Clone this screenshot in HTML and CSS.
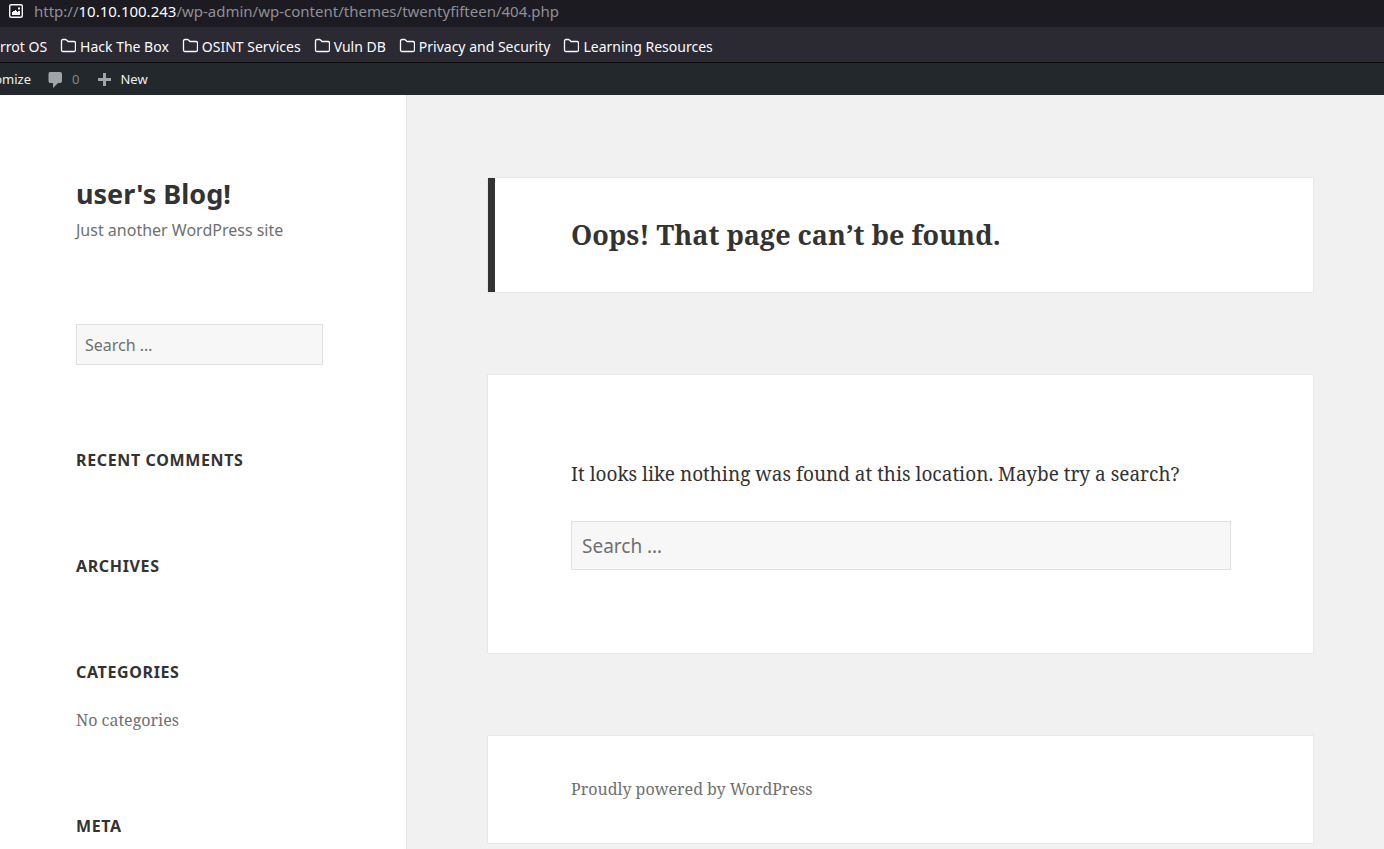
FILE: index.html
```html
<!DOCTYPE html>
<html lang="en">
<head>
<meta charset="utf-8">
<title>Page not found – user's Blog!</title>
<link rel="stylesheet" href="styles.css">
</head>
<body>
<svg class="defs" aria-hidden="true">
<symbol id="folder" viewBox="0 0 16 16"><path d="M1.500 3Q1.500 1.500 3 1.500H5.500Q6 1.500 6.500 2L8 3.500H14Q15.500 3.500 15.500 5V12Q15.500 13.500 14 13.500H3Q1.500 13.500 1.500 12Z" fill="none" stroke="currentColor" stroke-width="1.300"/></symbol>
</svg>
<div class="address">
<svg class="page-icon" viewBox="0 0 16 16" aria-hidden="true"><rect x="1.700" y="1.700" width="12.600" height="12.600" rx="1.500" fill="none" stroke="currentColor" stroke-width="1.400"/><path d="M4 12V9H5V8H7V7H8V8H9V9H10V8H12V12Z" fill="currentColor"/><path d="M10 4.500H12V6.500H10Z" fill="currentColor"/></svg>
<span class="url">http://<b>10.10.100.243</b>/wp-admin/wp-content/themes/twentyfifteen/404.php</span>
</div>
<nav class="bookmarks" aria-label="Bookmarks">
<a href="#">rrot OS</a>
<a href="#"><svg aria-hidden="true"><use href="#folder"/></svg>Hack The Box</a>
<a href="#"><svg aria-hidden="true"><use href="#folder"/></svg>OSINT Services</a>
<a href="#"><svg aria-hidden="true"><use href="#folder"/></svg>Vuln DB</a>
<a href="#"><svg aria-hidden="true"><use href="#folder"/></svg>Privacy and Security</a>
<a href="#"><svg aria-hidden="true"><use href="#folder"/></svg>Learning Resources</a>
</nav>
<nav class="adminbar" aria-label="Toolbar">
<a href="#" class="customize">omize</a>
<a href="#" class="comments"><svg viewBox="0 0 20 20" aria-hidden="true"><path d="M5 3h10q2 0 2 2v7q0 2-2 2h-2l-5 5v-5H5q-1.500 0-1.500-2V5q0-2 1.500-2z" fill="currentColor"/></svg>0</a>
<a href="#" class="new"><svg viewBox="0 0 20 20" aria-hidden="true"><path d="M17 9v3h-5v5H9v-5H4V9h5V4h3v5z" fill="currentColor"/></svg>New</a>
</nav>
<div class="site">
<aside class="sidebar">
<header>
<h1><a href="#">user's Blog!</a></h1>
<p class="tagline">Just another WordPress site</p>
</header>
<form><input class="search" type="search" placeholder="Search …" aria-label="Search"></form>
<section><h2>Recent Comments</h2></section>
<section><h2>Archives</h2></section>
<section><h2>Categories</h2><p>No categories</p></section>
<section><h2>Meta</h2></section>
</aside>
<div class="content">
<main>
<header class="card title"><h1>Oops! That page can’t be found.</h1></header>
<div class="card body">
<p>It looks like nothing was found at this location. Maybe try a search?</p>
<form><input class="search" type="search" placeholder="Search …" aria-label="Search this site"></form>
</div>
</main>
<footer class="card"><a href="#">Proudly powered by WordPress</a></footer>
</div>
</div>
</body>
</html>
```
FILE: styles.css
```css
* { box-sizing: border-box; }
html { height: 100%; }
body { margin: 0; height: 100%; display: flex; flex-direction: column; overflow: hidden; font-family: "Noto Sans", sans-serif; color: #333; background: #f1f1f1; }
a { color: inherit; text-decoration: none; }
h1, h2, p { margin: 0; }
.defs { display: none; }
.address, .bookmarks, .adminbar { flex: none; display: flex; align-items: center; white-space: nowrap; overflow: hidden; }
.address { height: 27px; padding: 0 8px 5px; gap: 10px; background: #1c1b22; color: #fbfbfe; font-size: 15px; }
.page-icon { width: 16px; height: 16px; }
.url { color: #8f8f96; }
.url b { font-weight: 400; color: #fbfbfe; }
.bookmarks { height: 36px; padding-top: 3px; gap: 13px; background: #2b2a33; border-bottom: 1px solid #0c0c0d; color: #fbfbfe; font-size: 14px; }
.bookmarks a { display: flex; align-items: center; gap: 4px; }
.bookmarks svg { width: 16px; height: 16px; }
.adminbar { height: 32px; background: #23282d; color: #eee; font-size: 13px; }
.adminbar a { display: flex; align-items: center; }
.adminbar svg { width: 20px; height: 20px; color: #a0a5aa; }
.customize { width: 31px; justify-content: flex-end; }
.comments { margin-left: 14px; gap: 7px; color: #82878c; }
.new { margin-left: 15px; gap: 6px; }
.site { flex: 1; min-height: 0; display: flex; }
.sidebar { width: 29.4118%; flex: none; padding: 80px 6% 0 76px; background: #fff; border-right: 1px solid #e7e7e7; overflow: hidden; }
.sidebar h1 { font-size: 27px; line-height: 38px; font-weight: 700; }
.tagline { margin-top: 4px; font-size: 16px; line-height: 26px; color: #707070; }
.search { display: block; width: 100%; border: 1px solid #e1e1e1; border-radius: 0; background: #f7f7f7; font-family: "Noto Sans", sans-serif; color: #707070; outline: none; appearance: none; }
.search::placeholder { color: #707070; opacity: 1; }
.sidebar .search { height: 41px; margin: 81px 0; padding: 0 8px; font-size: 16px; }
.sidebar section { margin-bottom: 78px; }
.sidebar h2 { font-size: 16px; line-height: 28px; letter-spacing: 0.04em; text-transform: uppercase; }
.sidebar section p { margin-top: 20px; font: 16px/28px "Noto Serif", serif; color: #707070; }
.content { flex: 1; padding: 82px 70px 0 80px; overflow: hidden; font-family: "Noto Serif", serif; }
.card { background: #fff; border: 1px solid #e7e7e7; border-radius: 1px; margin-bottom: 81px; padding: 0 82px 0 83px; }
.title { padding-top: 38px; padding-bottom: 38px; box-shadow: inset 7px 0 #333; }
.title h1 { font-size: 27px; line-height: 38px; }
.body { padding-top: 83px; padding-bottom: 83px; }
.body p { font-size: 19px; line-height: 32px; }
.body .search { height: 49px; margin-top: 31px; padding: 0 10px; font-size: 19px; }
footer.card { padding-top: 40px; padding-bottom: 40px; font-size: 16px; line-height: 27px; color: #707070; }
```
